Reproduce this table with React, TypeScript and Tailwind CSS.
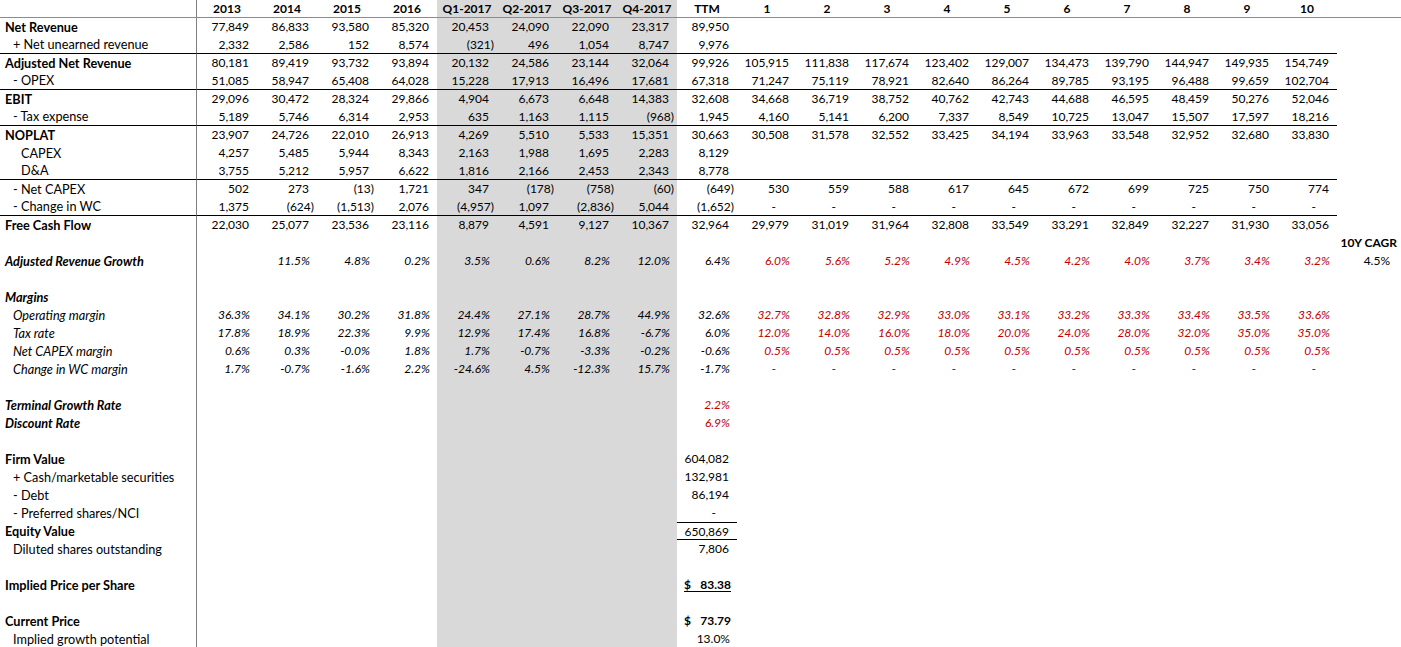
const HEADERS = ['2013', '2014', '2015', '2016', 'Q1-2017', 'Q2-2017', 'Q3-2017', 'Q4-2017', 'TTM', '1', '2', '3', '4', '5', '6', '7', '8', '9', '10']

type Row = {
  label?: string
  kind?: 'bold' | 'sub' | 'sub2' | 'boldItalic' | 'italic'
  values?: string[]
  forecast?: string[]
  pct?: boolean
  line?: boolean
  cagr?: string
  cagrHead?: boolean
  ttmRed?: boolean
  special?: 'equity' | 'implied' | 'current'
}

const dashes = Array(10).fill('-')

const ROWS: Row[] = [
  { label: 'Net Revenue', kind: 'bold', values: ['77,849', '86,833', '93,580', '85,320', '20,453', '24,090', '22,090', '23,317', '89,950'] },
  { label: '+ Net unearned revenue', kind: 'sub', line: true, values: ['2,332', '2,586', '152', '8,574', '(321)', '496', '1,054', '8,747', '9,976'] },
  {
    label: 'Adjusted Net Revenue', kind: 'bold',
    values: ['80,181', '89,419', '93,732', '93,894', '20,132', '24,586', '23,144', '32,064', '99,926', '105,915', '111,838', '117,674', '123,402', '129,007', '134,473', '139,790', '144,947', '149,935', '154,749'],
  },
  {
    label: '- OPEX', kind: 'sub', line: true,
    values: ['51,085', '58,947', '65,408', '64,028', '15,228', '17,913', '16,496', '17,681', '67,318', '71,247', '75,119', '78,921', '82,640', '86,264', '89,785', '93,195', '96,488', '99,659', '102,704'],
  },
  {
    label: 'EBIT', kind: 'bold',
    values: ['29,096', '30,472', '28,324', '29,866', '4,904', '6,673', '6,648', '14,383', '32,608', '34,668', '36,719', '38,752', '40,762', '42,743', '44,688', '46,595', '48,459', '50,276', '52,046'],
  },
  {
    label: '- Tax expense', kind: 'sub', line: true,
    values: ['5,189', '5,746', '6,314', '2,953', '635', '1,163', '1,115', '(968)', '1,945', '4,160', '5,141', '6,200', '7,337', '8,549', '10,725', '13,047', '15,507', '17,597', '18,216'],
  },
  {
    label: 'NOPLAT', kind: 'bold',
    values: ['23,907', '24,726', '22,010', '26,913', '4,269', '5,510', '5,533', '15,351', '30,663', '30,508', '31,578', '32,552', '33,425', '34,194', '33,963', '33,548', '32,952', '32,680', '33,830'],
  },
  { label: 'CAPEX', kind: 'sub2', values: ['4,257', '5,485', '5,944', '8,343', '2,163', '1,988', '1,695', '2,283', '8,129'] },
  { label: 'D&A', kind: 'sub2', line: true, values: ['3,755', '5,212', '5,957', '6,622', '1,816', '2,166', '2,453', '2,343', '8,778'] },
  {
    label: '- Net CAPEX', kind: 'sub',
    values: ['502', '273', '(13)', '1,721', '347', '(178)', '(758)', '(60)', '(649)', '530', '559', '588', '617', '645', '672', '699', '725', '750', '774'],
  },
  {
    label: '- Change in WC', kind: 'sub', line: true,
    values: ['1,375', '(624)', '(1,513)', '2,076', '(4,957)', '1,097', '(2,836)', '5,044', '(1,652)', ...dashes],
  },
  {
    label: 'Free Cash Flow', kind: 'bold',
    values: ['22,030', '25,077', '23,536', '23,116', '8,879', '4,591', '9,127', '10,367', '32,964', '29,979', '31,019', '31,964', '32,808', '33,549', '33,291', '32,849', '32,227', '31,930', '33,056'],
  },
  { cagrHead: true },
  {
    label: 'Adjusted Revenue Growth', kind: 'boldItalic', pct: true,
    values: ['', '11.5%', '4.8%', '0.2%', '3.5%', '0.6%', '8.2%', '12.0%', '6.4%'],
    forecast: ['6.0%', '5.6%', '5.2%', '4.9%', '4.5%', '4.2%', '4.0%', '3.7%', '3.4%', '3.2%'],
    cagr: '4.5%',
  },
  {},
  { label: 'Margins', kind: 'boldItalic' },
  {
    label: 'Operating margin', kind: 'italic', pct: true,
    values: ['36.3%', '34.1%', '30.2%', '31.8%', '24.4%', '27.1%', '28.7%', '44.9%', '32.6%'],
    forecast: ['32.7%', '32.8%', '32.9%', '33.0%', '33.1%', '33.2%', '33.3%', '33.4%', '33.5%', '33.6%'],
  },
  {
    label: 'Tax rate', kind: 'italic', pct: true,
    values: ['17.8%', '18.9%', '22.3%', '9.9%', '12.9%', '17.4%', '16.8%', '-6.7%', '6.0%'],
    forecast: ['12.0%', '14.0%', '16.0%', '18.0%', '20.0%', '24.0%', '28.0%', '32.0%', '35.0%', '35.0%'],
  },
  {
    label: 'Net CAPEX margin', kind: 'italic', pct: true,
    values: ['0.6%', '0.3%', '-0.0%', '1.8%', '1.7%', '-0.7%', '-3.3%', '-0.2%', '-0.6%'],
    forecast: Array(10).fill('0.5%'),
  },
  {
    label: 'Change in WC margin', kind: 'italic', pct: true,
    values: ['1.7%', '-0.7%', '-1.6%', '2.2%', '-24.6%', '4.5%', '-12.3%', '15.7%', '-1.7%'],
    forecast: dashes,
  },
  {},
  { label: 'Terminal Growth Rate', kind: 'boldItalic', pct: true, ttmRed: true, values: ['', '', '', '', '', '', '', '', '2.2%'] },
  { label: 'Discount Rate', kind: 'boldItalic', pct: true, ttmRed: true, values: ['', '', '', '', '', '', '', '', '6.9%'] },
  {},
  { label: 'Firm Value', kind: 'bold', values: ['', '', '', '', '', '', '', '', '604,082'] },
  { label: '+ Cash/marketable securities', kind: 'sub', values: ['', '', '', '', '', '', '', '', '132,981'] },
  { label: '- Debt', kind: 'sub', values: ['', '', '', '', '', '', '', '', '86,194'] },
  { label: '- Preferred shares/NCI', kind: 'sub', values: ['', '', '', '', '', '', '', '', '-'] },
  { label: 'Equity Value', kind: 'bold', special: 'equity', values: ['', '', '', '', '', '', '', '', '650,869'] },
  { label: 'Diluted shares outstanding', kind: 'sub', values: ['', '', '', '', '', '', '', '', '7,806'] },
  {},
  { label: 'Implied Price per Share', kind: 'bold', special: 'implied' },
  {},
  { label: 'Current Price', kind: 'bold', special: 'current' },
  { label: 'Implied growth potential', kind: 'sub', values: ['', '', '', '', '', '', '', '', '13.0%'] },
]

function labelClass(kind?: Row['kind']) {
  switch (kind) {
    case 'bold':
      return 'pl-[5px] font-bold'
    case 'boldItalic':
      return 'pl-[5px] font-bold italic'
    case 'italic':
      return 'pl-[13px] italic'
    case 'sub2':
      return 'pl-[21px]'
    case 'sub':
      return 'pl-[13px]'
    default:
      return 'pl-[5px]'
  }
}

function padClass(v: string) {
  if (v === '-') return 'pr-[21px]'
  if (v.endsWith(')')) return 'pr-[3px]'
  if (v.endsWith('%')) return 'pr-[7px]'
  return 'pr-[8px]'
}

function Cell({ i, value, row }: { i: number; value: string; row: Row }) {
  const grey = i >= 4 && i <= 7
  const red = (i >= 9 && row.forecast) || (i === 8 && row.ttmRed)
  const italic = row.pct

  if (i === 8 && row.special === 'implied') {
    return (
      <div className="w-[60px] h-[18px] shrink-0 flex items-center pl-[7px] pr-[6px]">
        <div className="flex w-full justify-between font-bold leading-[13px] border-b border-black">
          <span>$</span>
          <span>83.38</span>
        </div>
      </div>
    )
  }
  if (i === 8 && row.special === 'current') {
    return (
      <div className="w-[60px] h-[18px] shrink-0 flex justify-between pl-[7px] pr-[6px] font-bold leading-[18px]">
        <span>$</span>
        <span>73.79</span>
      </div>
    )
  }

  return (
    <div
      className={[
        'w-[60px] h-[18px] shrink-0 text-right leading-[18px] whitespace-nowrap box-border',
        grey ? 'bg-[#d9d9d9]' : '',
        row.line ? 'border-b border-black leading-[17px]' : '',
        i === 8 && row.special === 'equity' ? 'border-t border-b border-black leading-[16px]' : '',
        red ? 'text-[#c00000]' : 'text-black',
        italic ? 'italic' : '',
        padClass(value),
      ].join(' ')}
    >
      {value}
    </div>
  )
}

function SheetRow({ row }: { row: Row }) {
  const vals = [...(row.values ?? [])]
  while (vals.length < 9) vals.push('')
  const all = row.forecast ? [...vals.slice(0, 9), ...row.forecast] : vals
  while (all.length < 19) all.push('')

  return (
    <div className="flex h-[18px]">
      <div
        className={[
          'w-[197px] h-[18px] shrink-0 border-r border-[#808080] whitespace-nowrap box-border text-[12.7px]',
          row.line ? 'border-b border-b-black leading-[17px]' : 'leading-[18px]',
          labelClass(row.kind),
        ].join(' ')}
      >
        {row.label}
      </div>
      {all.map((v, i) => (
        <Cell key={i} i={i} value={v} row={row} />
      ))}
      <div className="flex-1 h-[18px] text-right leading-[18px] whitespace-nowrap">
        {row.cagrHead && <span className="font-bold pr-[4px]">10Y CAGR</span>}
        {row.cagr && <span className="pr-[11px]">{row.cagr}</span>}
      </div>
    </div>
  )
}

export default function App() {
  return (
    <div className="w-[1401px] h-[647px] overflow-hidden bg-white text-black text-[12px] font-['Lato','Liberation_Sans',sans-serif]">
      <div className="flex h-[18px] border-b border-[#8c8c8c] box-border">
        <div className="w-[197px] shrink-0 border-r border-[#808080]" />
        {HEADERS.map((h, i) => (
          <div
            key={h}
            className={[
              'w-[60px] shrink-0 text-center font-bold leading-[17px]',
              i >= 4 && i <= 7 ? 'bg-[#d9d9d9]' : '',
            ].join(' ')}
          >
            {h}
          </div>
        ))}
        <div className="flex-1" />
      </div>
      {ROWS.map((row, idx) => (
        <SheetRow key={idx} row={row} />
      ))}
    </div>
  )
}
